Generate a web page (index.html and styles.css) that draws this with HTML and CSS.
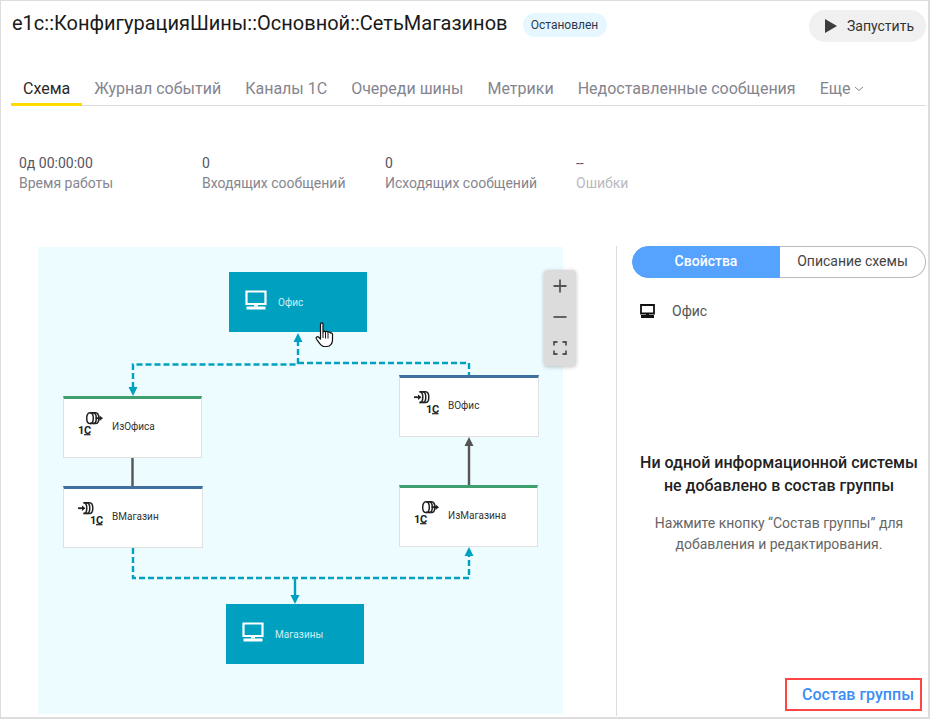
FILE: index.html
```html
<!DOCTYPE html>
<html lang="ru">
<head>
<meta charset="utf-8">
<title>СетьМагазинов</title>
<link rel="stylesheet" href="styles.css">
</head>
<body>
<svg class="defs" width="0" height="0" aria-hidden="true">
  <defs>
    <symbol id="monitor" viewBox="0 0 22 20">
      <path d="M1.500 1.500h19v12.500h-19z" fill="none" stroke="currentColor" stroke-width="2.200"/>
      <path d="M9 14h4v2.500H9z" fill="currentColor"/>
      <path d="M1.500 16.500h19v3h-19z" fill="currentColor"/>
    </symbol>
    <symbol id="monitor-bold" viewBox="0 0 15 14">
      <path d="M1 1h13v8.500H1z" fill="none" stroke="currentColor" stroke-width="1.800"/>
      <path d="M6 9.500h3v2H6z" fill="currentColor"/>
      <path d="M1 11h13v3H1z" fill="currentColor"/>
    </symbol>
    <symbol id="svc-out" viewBox="0 0 26 24">
      <g fill="none" stroke="#222" stroke-width="1.500">
        <path d="M13 .8h5.500c2.200 0 3.300 2.500 3.300 5.400s-1.100 5.400-3.300 5.400H13c-2.200 0-3.300-2.500-3.300-5.400S10.800 .8 13 .8z"/>
        <path d="M13 .8c2.200 0 3.300 2.500 3.300 5.400s-1.100 5.400-3.300 5.400M16 .8c2.200 0 3.300 2.500 3.300 5.400s-1.100 5.400-3.300 5.400"/>
        <path d="M18.500 6.200h5" stroke-width="1.800"/>
      </g>
      <path d="M22.500 3.400l3.500 2.800-3.500 2.800z" fill="#222"/>
      <text x="1" y="22" class="one-c">1С</text>
      <path d="M7 22.700h6.500" stroke="#222" stroke-width="1.200"/>
    </symbol>
    <symbol id="svc-in" viewBox="0 0 26 24">
      <g fill="none" stroke="#222" stroke-width="1.500">
        <path d="M6.500 .8h6c2.200 0 3.300 2.500 3.300 5.400s-1.100 5.400-3.300 5.400h-6"/>
        <path d="M6.500 .8c2.200 0 3.300 2.500 3.300 5.400s-1.100 5.400-3.300 5.400M9.500 .8c2.200 0 3.300 2.500 3.300 5.400s-1.100 5.400-3.300 5.400"/>
        <path d="M1 6.200h5" stroke-width="1.800"/>
      </g>
      <path d="M5 3.400l3.500 2.800-3.500 2.800z" fill="#222"/>
      <text x="13" y="22" class="one-c">1С</text>
      <path d="M19 22.700h6.500" stroke="#222" stroke-width="1.200"/>
    </symbol>
  </defs>
</svg>

<main class="frame">
  <header class="head">
    <h1 class="title">е1с::КонфигурацияШины::Основной::СетьМагазинов</h1>
    <span class="badge">Остановлен</span>
    <button class="run" type="button"><span class="run-arrow"></span>Запустить</button>
  </header>

  <nav class="tabs">
    <a class="tab active">Схема</a>
    <a class="tab">Журнал событий</a>
    <a class="tab">Каналы 1С</a>
    <a class="tab">Очереди шины</a>
    <a class="tab">Метрики</a>
    <a class="tab">Недоставленные сообщения</a>
    <a class="tab">Еще <svg class="chev" width="10" height="6" viewBox="0 0 10 6"><path d="M1 1l4 3.500L9 1" fill="none" stroke="currentColor" stroke-width="1"/></svg></a>
  </nav>

  <section class="stats">
    <div class="stat"><div class="val">0д 00:00:00</div><div class="lbl">Время работы</div></div>
    <div class="stat"><div class="val">0</div><div class="lbl">Входящих сообщений</div></div>
    <div class="stat"><div class="val">0</div><div class="lbl">Исходящих сообщений</div></div>
    <div class="stat"><div class="val">--</div><div class="lbl muted">Ошибки</div></div>
  </section>

  <section class="work">
    <div class="canvas">
      <svg class="edges" width="525" height="467" viewBox="38 247 525 467">
        <g class="dash">
          <path d="M298 340V364.500H133V390"/>
          <path d="M298 363H469V375"/>
          <path d="M133 548V578H469V553"/>
        </g>
        <path class="flow" d="M295 578V598"/>
        <path class="solid" d="M132.500 458V487"/>
        <path class="solid" d="M469 485V445"/>
        <path class="tip" d="M298 333l-4.500 9h9z"/>
        <path class="tip" d="M133 396l-4.500-9h9z"/>
        <path class="tip" d="M469 547l-4.500 9h9z"/>
        <path class="tip" d="M295 604l-4.500-9h9z"/>
        <path class="tip-dark" d="M469 437l-4.500 9h9z"/>
      </svg>

      <div class="node group n-office"><svg class="mon"><use href="#monitor"/></svg><span>Офис</span></div>
      <div class="node group n-shops"><svg class="mon"><use href="#monitor"/></svg><span>Магазины</span></div>
      <div class="node svc green n-from-office"><svg class="svc-icon"><use href="#svc-out"/></svg><span>ИзОфиса</span></div>
      <div class="node svc blue n-to-shop"><svg class="svc-icon"><use href="#svc-in"/></svg><span>ВМагазин</span></div>
      <div class="node svc blue n-to-office"><svg class="svc-icon"><use href="#svc-in"/></svg><span>ВОфис</span></div>
      <div class="node svc green n-from-shop"><svg class="svc-icon"><use href="#svc-out"/></svg><span>ИзМагазина</span></div>

      <svg class="hand" width="20" height="26" viewBox="0 0 20 26">
        <path d="M5.500 2c0-1.500 2.500-1.500 2.500 0v8c0-1 2.500-1.200 2.500.2 0-1 2.500-1.200 2.500.3 0-.8 2.500-.8 2.500.6 .5-.4 2 0 2 1.200V18c0 3-2 6.500-5.500 6.500H9C6 24.500 4.500 21.500 1.500 17c-1-1.600.8-3 2.200-1.700l1.800 1.700z" fill="#fff" stroke="#111" stroke-width="1.200" stroke-linejoin="round"/>
        <path d="M8 10v6M10.500 10.500v6M13 11v5.500" fill="none" stroke="#111" stroke-width="1"/>
      </svg>

      <div class="zoom-box">
        <svg width="16" height="16" viewBox="0 0 16 16"><path d="M8 1.500v13M1.500 8h13" stroke="#555" stroke-width="1.800"/></svg>
        <svg width="16" height="16" viewBox="0 0 16 16"><path d="M1.500 8h13" stroke="#555" stroke-width="1.800"/></svg>
        <svg width="16" height="16" viewBox="0 0 16 16"><path d="M2 5.500V2h3.500M10.500 2H14v3.500M14 10.500V14h-3.500M5.500 14H2v-3.500" fill="none" stroke="#555" stroke-width="1.800"/></svg>
      </div>
    </div>

    <aside class="side">
      <div class="toggle">
        <button class="seg on" type="button">Свойства</button>
        <button class="seg" type="button">Описание схемы</button>
      </div>
      <div class="picked"><svg class="mon-dark"><use href="#monitor-bold"/></svg><span>Офис</span></div>
      <div class="empty">
        <h2 class="empty-h">Ни одной информационной системы<br>не добавлено в состав группы</h2>
        <p class="empty-p">Нажмите кнопку “Состав группы” для<br>добавления и редактирования.</p>
      </div>
      <div class="foot"><a class="members">Состав группы</a></div>
    </aside>
  </section>
</main>
</body>
</html>
```
FILE: styles.css
```css
* { box-sizing: border-box; }
html, body { margin: 0; padding: 0; }
body { font-family: Roboto, "Noto Sans", sans-serif; background: #fff; color: #333; }
.defs { position: absolute; }

.frame {
  width: 930px;
  height: 719px;
  border: solid #ddd;
  border-width: 1px 2px 2px 1px;
  overflow: hidden;
}

.head { display: flex; align-items: center; height: 46px; padding: 0 2px 2px 11px; }
.title { margin: 0; font-size: 20px; font-weight: 400; color: #1a1a1a; white-space: nowrap; }
.badge {
  margin: 4px 0 0 15px;
  height: 24px;
  width: 84px;
  border-radius: 12px;
  background: #e6f7ff;
  color: #2b3a4a;
  font-size: 12px;
  display: flex;
  align-items: center;
  justify-content: center;
}
.run {
  margin: 6px 0 0 auto;
  width: 117px;
  height: 32px;
  border: 0;
  border-radius: 16px;
  background: #f0f0f0;
  color: #333;
  font: 14px Roboto, sans-serif;
  display: flex;
  align-items: center;
  padding: 0 0 0 16px;
  gap: 10px;
}
.run-arrow { width: 0; height: 0; border-left: 12px solid #3c3c3c; border-top: 7.500px solid transparent; border-bottom: 7.500px solid transparent; }

.tabs { display: flex; height: 59px; margin: 0 2px 0 10px; padding-top: 29px; border-bottom: 1px solid #ddd; }
.tab { padding: 0 12px; height: 30px; font-size: 16px; line-height: 26px; color: #85858f; white-space: nowrap; }
.tab.active { color: #2a2a2a; border-bottom: 3px solid #ffdb00; height: 30px; }
.chev { vertical-align: 2px; margin-left: -1px; }

.stats { display: grid; grid-template-columns: 183px 183px 191px 183px; padding: 47px 0 0 18px; height: 140px; font-size: 14px; }
.val { line-height: 20px; color: #55555f; }
.lbl { line-height: 20px; color: #85858f; }
.lbl.muted { color: #b9b9c0; }

.work { display: flex; height: 470px; }
.canvas {
  position: relative;
  flex: none;
  width: 525px;
  height: 467px;
  margin: 1px 0 0 37px;
  background: #edfcff;
}
.edges { position: absolute; left: 0; top: 0; }
.dash { fill: none; stroke: #00a0c0; stroke-width: 2.400; stroke-dasharray: 6 3; }
.flow { fill: none; stroke: #00a0c0; stroke-width: 2.400; }
.solid { fill: none; stroke: #555; stroke-width: 2.400; }
.tip { fill: #00a0c0; }
.tip-dark { fill: #555; }

.node { position: absolute; display: flex; font-size: 10px; }
.group { align-items: center; background: #00a0c0; color: #cdeff6; width: 138px; height: 60px; padding-left: 16px; gap: 11px; }
.mon { width: 22px; height: 20px; color: #fff; margin-top: -4px; }
.svc { align-items: flex-start; background: #fff; color: #333; width: 139px; height: 62px; padding-left: 13px; gap: 9px; border: 1px solid #e0e0e0; border-top-width: 3px; }
.svc-icon { width: 26px; height: 24px; margin-top: 13px; }
.svc span { margin-top: 22px; }
.one-c { font: 700 11px Roboto, sans-serif; fill: #222; letter-spacing: -.4px; }
.green { border-top-color: #3f9f6f; }
.blue { border-top-color: #3f6f9f; }

.n-office { left: 191px; top: 25px; }
.n-shops { left: 188px; top: 357px; }
.n-from-office { left: 25px; top: 149px; }
.n-to-shop { left: 25px; top: 239px; width: 140px; }
.n-to-office { left: 361px; top: 128px; width: 140px; }
.n-from-shop { left: 361px; top: 238px; }

.hand { position: absolute; left: 277px; top: 75px; }

.zoom-box {
  position: absolute;
  left: 506px;
  top: 23px;
  width: 32px;
  height: 96px;
  background: #dcdcdc;
  border-radius: 4px;
  box-shadow: 0 1px 4px rgba(0,0,0,.25);
  display: flex;
  flex-direction: column;
  align-items: center;
  justify-content: space-around;
  padding-bottom: 2px;
}

.side {
  flex: none;
  width: 312px;
  margin-left: 53px;
  border-left: 1px solid #ddd;
  padding-left: 15px;
  display: flex;
  flex-direction: column;
  height: 470px;
}
.toggle { display: flex; width: 294px; height: 32px; }
.seg { font: 14px Roboto, sans-serif; border: 1px solid #bbb; background: #fff; color: #444; padding: 0 0 2px; height: 32px; }
.seg.on { width: 148px; background: #55a3ff; border-color: #55a3ff; color: #fff; border-radius: 16px 0 0 16px; font-weight: 500; }
.seg:not(.on) { width: 146px; border-left: 0; border-radius: 0 16px 16px 0; }
.picked { display: flex; align-items: center; gap: 17px; margin: 23px 0 0 8px; height: 20px; font-size: 14px; color: #555; }
.mon-dark { width: 15px; height: 14px; color: #111; }

.empty { margin-top: 130px; width: 294px; text-align: center; }
.empty-h { margin: 0; font-size: 16px; font-weight: 500; line-height: 23px; color: #222; }
.empty-p { margin: 16px 0 0; font-size: 14px; line-height: 21px; color: #666; }

.foot { margin-top: auto; margin-bottom: 5px; display: flex; justify-content: flex-end; padding-right: 6px; }
.members {
  width: 137px;
  height: 33px;
  border: 2px solid #f44;
  font-size: 16px;
  font-weight: 500;
  line-height: 29px;
  color: #3a8ef5;
  padding-left: 15px;
  white-space: nowrap;
}
```
